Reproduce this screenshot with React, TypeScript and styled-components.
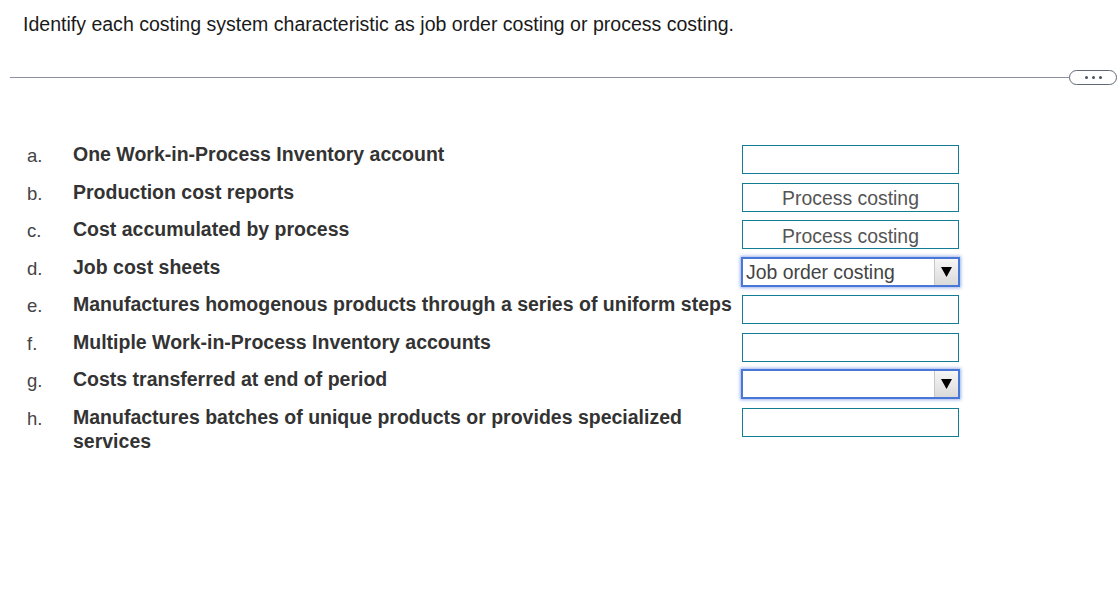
import React from "react";
import styled, { createGlobalStyle } from "styled-components";

const Global = createGlobalStyle`
  html, body { margin: 0; padding: 0; background: #fff; }
  body { font-family: "Liberation Sans", Arial, sans-serif; }
`;

const Page = styled.div`
  width: 1120px;
  height: 612px;
  overflow: hidden;
  background: #fff;
`;

const Prompt = styled.p`
  margin: 0;
  padding: 12px 0 0 23px;
  font-size: 19.55px;
  line-height: 24px;
  color: #1a1a1a;
`;

const DividerRow = styled.div`
  display: flex;
  align-items: center;
  margin: 34px 3px 0 10px;
`;

const Rule = styled.div`
  flex: 1;
  height: 1px;
  background: #8990a0;
`;

const MorePill = styled.button`
  display: flex;
  align-items: center;
  justify-content: center;
  gap: 4px;
  width: 48px;
  height: 15px;
  padding: 0;
  border: 1px solid #606876;
  border-radius: 8px;
  background: #fff;
`;

const Dot = styled.span`
  width: 3px;
  height: 3px;
  border-radius: 50%;
  background: #4a5260;
`;

const List = styled.div`
  display: flex;
  flex-direction: column;
  gap: 5.55px;
  margin-top: 57px;
  padding-left: 27px;
`;

const Row = styled.div`
  display: grid;
  grid-template-columns: 46px 669px 220px;
  align-items: start;
`;

const Letter = styled.span`
  font-size: 18.5px;
  line-height: 24px;
  padding-top: 2px;
  color: #444;
`;

const Statement = styled.span`
  font-size: 19.5px;
  line-height: 24px;
  font-weight: bold;
  color: #333;
`;

const AnswerBox = styled.div`
  box-sizing: border-box;
  margin-top: 3px;
  width: 217px;
  height: 29px;
  border: 1px solid #137d94;
  display: flex;
  align-items: center;
  justify-content: center;
  font-size: 19.4px;
  color: #555;
  padding-top: 3px;
`;

const Select = styled.div`
  box-sizing: border-box;
  margin-top: 2px;
  margin-left: -1px;
  width: 219px;
  height: 30px;
  border: 2px solid #4877d8;
  box-shadow: 0 0 3px 1px rgba(72, 119, 216, 0.55);
  display: flex;
  align-items: stretch;
  background: #fff;
`;

const SelectValue = styled.span`
  flex: 1;
  padding-left: 3px;
  font-size: 19.4px;
  line-height: 26px;
  color: #444;
  white-space: nowrap;
`;

const ArrowButton = styled.span`
  width: 23px;
  border-left: 1px solid #c8c8c8;
  background: linear-gradient(#f6f6f6, #dadada);
  display: flex;
  align-items: center;
  justify-content: center;
`;

type Item = {
  letter: string;
  text: React.ReactNode;
  kind: "box" | "select";
  value?: string;
};

const items: Item[] = [
  { letter: "a.", text: "One Work-in-Process Inventory account", kind: "box" },
  { letter: "b.", text: "Production cost reports", kind: "box", value: "Process costing" },
  { letter: "c.", text: "Cost accumulated by process", kind: "box", value: "Process costing" },
  { letter: "d.", text: "Job cost sheets", kind: "select", value: "Job order costing" },
  {
    letter: "e.",
    text: "Manufactures homogenous products through a series of uniform steps",
    kind: "box",
  },
  { letter: "f.", text: "Multiple Work-in-Process Inventory accounts", kind: "box" },
  { letter: "g.", text: "Costs transferred at end of period", kind: "select", value: "" },
  {
    letter: "h.",
    text: (
      <>
        Manufactures batches of unique products or provides specialized
        <br />
        services
      </>
    ),
    kind: "box",
  },
];

export default function App() {
  return (
    <Page>
      <Global />
      <Prompt>Identify each costing system characteristic as job order costing or process costing.</Prompt>
      <DividerRow>
        <Rule />
        <MorePill aria-label="more">
          <Dot />
          <Dot />
          <Dot />
        </MorePill>
      </DividerRow>
      <List>
        {items.map((it) => (
          <Row key={it.letter}>
            <Letter>{it.letter}</Letter>
            <Statement>{it.text}</Statement>
            {it.kind === "box" ? (
              <AnswerBox>{it.value}</AnswerBox>
            ) : (
              <Select>
                <SelectValue>{it.value}</SelectValue>
                <ArrowButton>
                  <svg width="11" height="10" viewBox="0 0 11 10">
                    <path d="M0 0 H11 L5.5 10 Z" fill="#000" />
                  </svg>
                </ArrowButton>
              </Select>
            )}
          </Row>
        ))}
      </List>
    </Page>
  );
}
